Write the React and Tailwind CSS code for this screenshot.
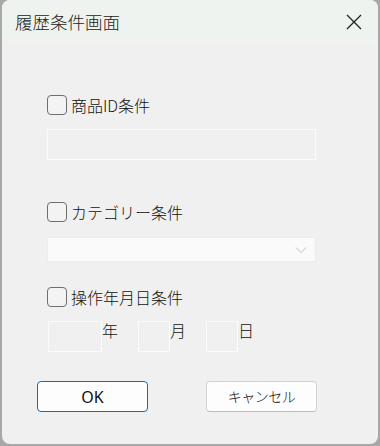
import React from "react";

const jp = { fontFamily: '"Noto Sans CJK JP", "Noto Sans", sans-serif' };

function Check({ label }) {
  return (
    <div className="flex items-center h-[20px]">
      <div className="w-[20px] h-[20px] rounded-[4px] border border-[#6e6e6e] bg-[#f3f3f3] box-border" />
      <span className="ml-[4px] text-[16px] leading-[20px] text-[#111] font-light">{label}</span>
    </div>
  );
}

export default function App() {
  return (
    <div className="w-[380px] h-[446px] bg-[#a8a8a8] pl-[2px] overflow-hidden" style={jp}>
      <div className="w-[376px] h-[444px] rounded-[8px] overflow-hidden bg-[#f0f0f0] flex flex-col">
        <div className="h-[44px] bg-[#eff3ef] flex items-center justify-between pl-[13px] pr-[14px] shrink-0">
          <span className="text-[17.5px] text-[#1a1a1a] leading-none font-light">履歴条件画面</span>
          <svg width="18" height="18" viewBox="0 0 18 18" className="mr-[1px]">
            <path d="M2 2 L16 16 M16 2 L2 16" stroke="#222" strokeWidth="1.3" fill="none" />
          </svg>
        </div>
        <div className="flex flex-col pl-[45px] pt-[51px]">
          <Check label="商品ID条件" />
          <div className="mt-[14px] w-[269px] h-[31px] border border-[#fbfbfb] bg-[#f0f0f0] box-border" />
          <div className="mt-[42px]">
            <Check label="カテゴリー条件" />
          </div>
          <div className="mt-[15px] w-[269px] h-[25px] border border-[#ececec] bg-[#fafafa] box-border flex items-center justify-end pr-[8px]">
            <svg width="12" height="8" viewBox="0 0 12 8">
              <path d="M1 1.5 L6 6.5 L11 1.5" stroke="#bdbdbd" strokeWidth="1" fill="none" />
            </svg>
          </div>
          <div className="mt-[25px]">
            <Check label="操作年月日条件" />
          </div>
          <div className="mt-[14px] flex items-start h-[31px]">
            <div className="w-[54px] h-[31px] border border-[#fbfbfb] box-border ml-[1px]" />
            <span className="text-[16px] leading-[18px] text-[#111] font-light">年</span>
            <div className="w-[32px] h-[31px] border border-[#fbfbfb] box-border ml-[20px]" />
            <span className="text-[16px] leading-[18px] text-[#111] font-light">月</span>
            <div className="w-[32px] h-[31px] border border-[#fbfbfb] box-border ml-[20px]" />
            <span className="text-[16px] leading-[18px] text-[#111] font-light">日</span>
          </div>
          <div className="mt-[29px] flex -ml-[10px]">
            <button className="w-[111px] h-[31px] rounded-[4px] border border-[#0f6cbd] bg-[#fdfdfd] text-[16px] text-[#111] flex items-center justify-center" style={{ fontFamily: '"Noto Sans", sans-serif' }}>
              OK
            </button>
            <button className="ml-[58px] w-[111px] h-[31px] rounded-[4px] border border-[#d2d2d2] border-b-[#bcbcbc] bg-[#fdfdfd] text-[14px] tracking-[-0.5px] text-[#111] font-light flex items-center justify-center">
              キャンセル
            </button>
          </div>
        </div>
      </div>
    </div>
  );
}
